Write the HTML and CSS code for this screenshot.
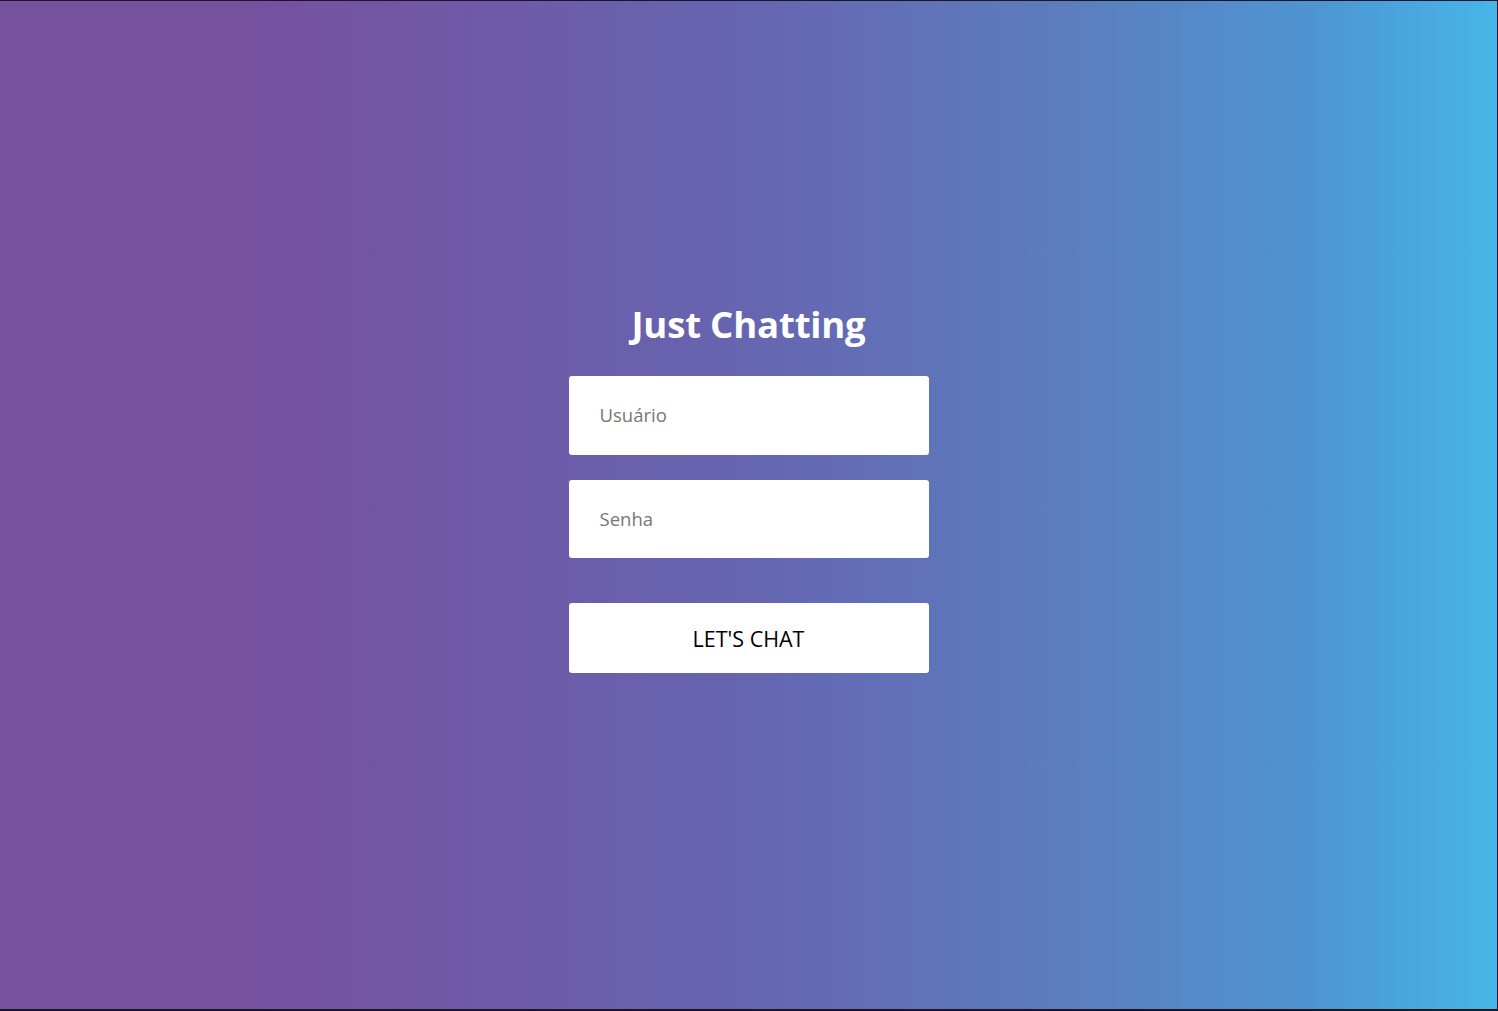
FILE: index.html
```html
<!DOCTYPE html>
<html lang="pt">
<head>
<meta charset="utf-8">
<title>Just Chatting</title>
<link rel="stylesheet" href="styles.css">
</head>
<body>
<main class="screen">
  <form class="login">
    <h1 class="title">Just Chatting</h1>
    <input class="field field-user" type="text" placeholder="Usuário">
    <input class="field field-pass" type="password" placeholder="Senha">
    <button class="btn" type="button">LET'S CHAT</button>
  </form>
</main>
</body>
</html>
```
FILE: styles.css
```css
html, body {
  margin: 0;
  padding: 0;
  height: 100%;
}
* {
  box-sizing: border-box;
}
body {
  background: #1b1626;
  padding: 1px 1px 2px 0;
}
.screen {
  height: 100%;
  background: linear-gradient(to right, #77509e 0%, #77509e 16%, #6665b0 50%, #5b7ebf 72%, #4e95d3 88%, #45b6e8 100%);
  display: flex;
  align-items: center;
  justify-content: center;
  font-family: "Open Sans", "Noto Sans", sans-serif;
}
.login {
  width: 360px;
  display: flex;
  flex-direction: column;
  align-items: stretch;
  margin-top: -37px;
}
.title {
  margin: 0 0 28px;
  text-align: center;
  color: #fff;
  font-size: 36.6px;
  font-weight: 700;
  line-height: 48px;
  letter-spacing: -0.2px;
}
.field {
  height: 78px;
  border: none;
  border-radius: 3px;
  background: #fff;
  padding: 0 0 2px 31px;
  font-family: inherit;
  font-size: 18.5px;
  color: #333;
  margin: 0 0 25px;
  outline: none;
}
.field-user {
  height: 79px;
}
.field::placeholder {
  color: #777;
}
.field-pass {
  margin-bottom: 45px;
}
.btn {
  height: 70px;
  border: none;
  border-radius: 3px;
  background: #fff;
  font-family: inherit;
  font-size: 21.5px;
  color: #000;
  padding: 0;
  cursor: pointer;
}
```
